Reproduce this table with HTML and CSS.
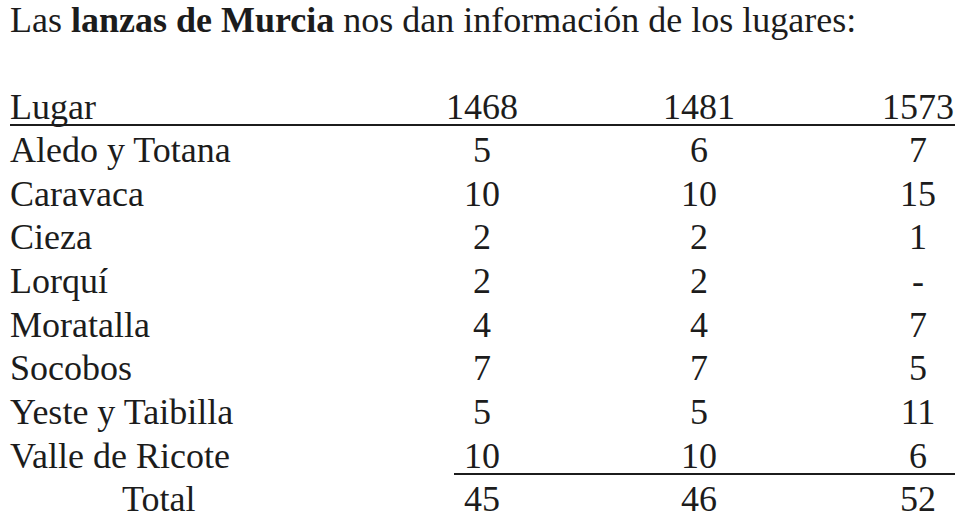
FILE: index.html
```html
<!DOCTYPE html>
<html lang="es">
<head>
<meta charset="utf-8">
<title>Lanzas de Murcia</title>
<link rel="stylesheet" href="styles.css">
</head>
<body>
<p class="intro">Las <b>lanzas de Murcia</b> nos dan información de los lugares:</p>
<div class="table">
  <div class="cell head label">Lugar</div>
  <div class="cell head num">1468</div>
  <div class="cell head num">1481</div>
  <div class="cell head num last">1573</div>

  <div class="cell label">Aledo y Totana</div>
  <div class="cell num">5</div>
  <div class="cell num">6</div>
  <div class="cell num last">7</div>

  <div class="cell label">Caravaca</div>
  <div class="cell num">10</div>
  <div class="cell num">10</div>
  <div class="cell num last">15</div>

  <div class="cell label">Cieza</div>
  <div class="cell num">2</div>
  <div class="cell num">2</div>
  <div class="cell num last">1</div>

  <div class="cell label">Lorquí</div>
  <div class="cell num">2</div>
  <div class="cell num">2</div>
  <div class="cell num last">-</div>

  <div class="cell label">Moratalla</div>
  <div class="cell num">4</div>
  <div class="cell num">4</div>
  <div class="cell num last">7</div>

  <div class="cell label">Socobos</div>
  <div class="cell num">7</div>
  <div class="cell num">7</div>
  <div class="cell num last">5</div>

  <div class="cell label">Yeste y Taibilla</div>
  <div class="cell num">5</div>
  <div class="cell num">5</div>
  <div class="cell num last">11</div>

  <div class="cell end label blank">Valle de Ricote</div>
  <div class="cell end num">10</div>
  <div class="cell end num">10</div>
  <div class="cell end num last">6</div>

  <div class="cell label total">Total</div>
  <div class="cell num">45</div>
  <div class="cell num">46</div>
  <div class="cell num last">52</div>
</div>
</body>
</html>
```
FILE: styles.css
```css
html, body {
  margin: 0;
  padding: 0;
  background: #ffffff;
}

body {
  padding-left: 10px;
  font-family: "Liberation Serif", "Times New Roman", serif;
  font-size: 36px;
  color: #1c1c1c;
}

.intro {
  margin: 0;
  line-height: 40px;
  white-space: nowrap;
}

.intro b {
  font-weight: bold;
}

.table {
  margin-top: 50px;
  display: grid;
  grid-template-columns: 444px 56px 378px 67px;
}

.cell {
  line-height: 43.66px;
  white-space: nowrap;
}

.num {
  display: flex;
  justify-content: center;
}

.num.last {
  padding-right: 7px;
}

.head {
  line-height: 34px;
  border-bottom: 2px solid #1c1c1c;
  margin-bottom: 3px;
}

.end {
  line-height: 34px;
  padding-top: 4px;
  border-bottom: 2px solid #1c1c1c;
  margin-bottom: 3px;
}

.end.blank {
  border-bottom-color: transparent;
}

.total {
  padding-left: 112px;
}
```
